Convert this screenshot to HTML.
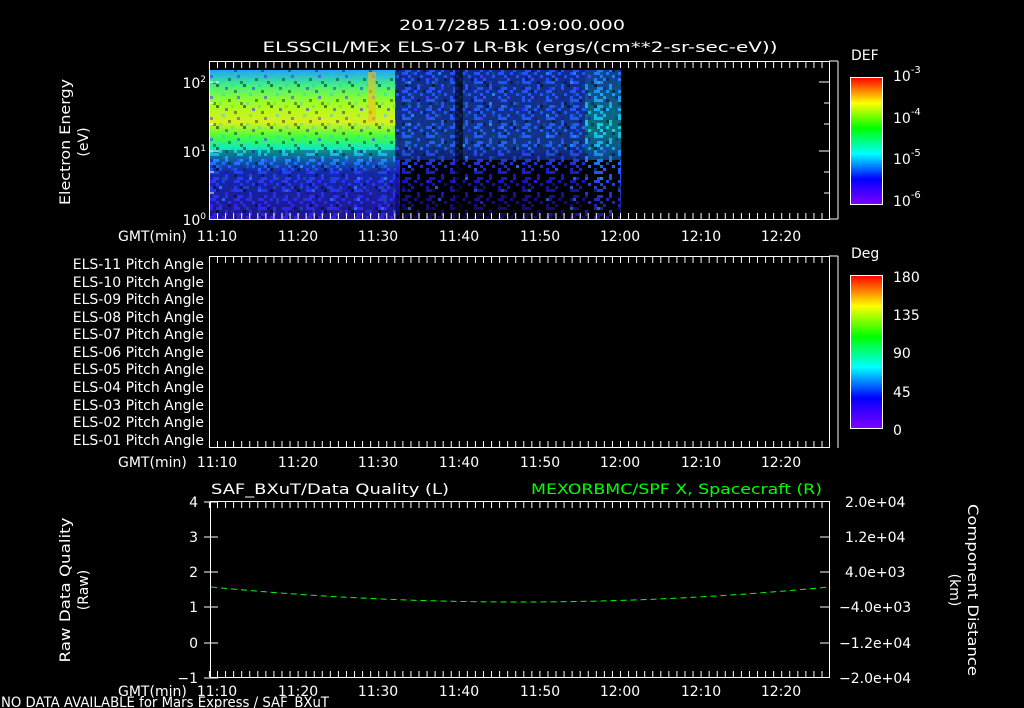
<!DOCTYPE html>
<html><head><meta charset="utf-8"><style>
html,body{margin:0;padding:0;background:#000;width:1024px;height:708px;overflow:hidden}
svg{display:block}
text{font-family:"DejaVu Sans","Liberation Sans",sans-serif;fill:#fff;font-size:14px}
</style></head><body>
<svg width="1024" height="708" viewBox="0 0 1024 708" xmlns="http://www.w3.org/2000/svg">
<defs>
<linearGradient id="cb" x1="0" y1="1" x2="0" y2="0">
<stop offset="0" stop-color="#7f00ff"/><stop offset="0.2" stop-color="#0000ff"/><stop offset="0.4" stop-color="#00ffff"/><stop offset="0.6" stop-color="#00ff00"/><stop offset="0.8" stop-color="#ffff00"/><stop offset="1" stop-color="#ff0000"/>
</linearGradient>
<linearGradient id="sp1" x1="0" y1="0" x2="0" y2="1">
<stop offset="0" stop-color="#20a0ff"/><stop offset="0.1" stop-color="#40f080"/><stop offset="0.22" stop-color="#a0ff20"/><stop offset="0.35" stop-color="#d8f020"/><stop offset="0.45" stop-color="#40ff40"/><stop offset="0.53" stop-color="#10e8c0"/><stop offset="0.6" stop-color="#1890ff"/><stop offset="0.68" stop-color="#2040ff"/><stop offset="1" stop-color="#3020e0"/>
</linearGradient>
<linearGradient id="sp2" x1="0" y1="0" x2="0" y2="1">
<stop offset="0" stop-color="#2050ff"/><stop offset="0.5" stop-color="#2060f0"/><stop offset="0.7" stop-color="#1818c0"/><stop offset="1" stop-color="#100850"/>
</linearGradient>
<linearGradient id="sp3" x1="0" y1="0" x2="0" y2="1">
<stop offset="0" stop-color="#2070ff"/><stop offset="0.4" stop-color="#10d0e0"/><stop offset="0.7" stop-color="#2050ff"/><stop offset="1" stop-color="#201080"/>
</linearGradient>
<pattern id="noise" width="27" height="21" patternUnits="userSpaceOnUse">
<rect x="0" y="0" width="3" height="3" fill="#000" opacity=".5"/><rect x="9" y="3" width="3" height="3" fill="#3010ff" opacity=".5"/><rect x="18" y="6" width="3" height="3" fill="#000" opacity=".4"/><rect x="6" y="9" width="3" height="3" fill="#20c0ff" opacity=".4"/><rect x="21" y="12" width="3" height="3" fill="#6010ff" opacity=".5"/><rect x="12" y="15" width="3" height="3" fill="#000" opacity=".4"/><rect x="3" y="18" width="3" height="3" fill="#20d0ff" opacity=".4"/><rect x="15" y="0" width="3" height="3" fill="#20b0ff" opacity=".3"/><rect x="24" y="18" width="3" height="3" fill="#000" opacity=".4"/>
</pattern>
<pattern id="noise2" width="24" height="18" patternUnits="userSpaceOnUse">
<rect x="0" y="0" width="6" height="3" fill="#000"/><rect x="9" y="0" width="9" height="3" fill="#000"/><rect x="3" y="3" width="9" height="3" fill="#000"/><rect x="15" y="3" width="9" height="3" fill="#000"/><rect x="0" y="6" width="3" height="3" fill="#000"/><rect x="6" y="6" width="12" height="3" fill="#000"/><rect x="21" y="6" width="3" height="3" fill="#000"/><rect x="3" y="9" width="15" height="3" fill="#000"/><rect x="0" y="12" width="9" height="3" fill="#000"/><rect x="12" y="12" width="12" height="3" fill="#000"/><rect x="3" y="15" width="6" height="3" fill="#000"/><rect x="12" y="15" width="9" height="3" fill="#000"/>
</pattern>
</defs>

<text x="512" y="30" text-anchor="middle" font-size="16" textLength="226" lengthAdjust="spacingAndGlyphs">2017/285 11:09:00.000</text>
<text x="520" y="52" text-anchor="middle" font-size="16" textLength="515" lengthAdjust="spacingAndGlyphs">ELSSCIL/MEx ELS-07 LR-Bk  (ergs/(cm**2-sr-sec-eV))</text>

<!-- spectrogram -->
<rect x="210" y="70" width="185" height="149" fill="url(#sp1)"/>
<rect x="210" y="70" width="185" height="149" fill="url(#noise)"/>
<rect x="210" y="150" width="185" height="69" fill="url(#noise2)" opacity=".35"/>
<rect x="368" y="72" width="8" height="50" fill="#f0c020" opacity=".6"/>
<rect x="395" y="70" width="190" height="149" fill="url(#sp2)"/>
<rect x="585" y="70" width="36" height="149" fill="url(#sp3)"/>
<rect x="395" y="70" width="226" height="149" fill="url(#noise)"/>
<rect x="395" y="70" width="226" height="90" fill="url(#noise2)" opacity=".45"/>
<rect x="400" y="160" width="220" height="59" fill="url(#noise2)"/>
<rect x="455" y="70" width="8" height="149" fill="#000" opacity=".6"/>

<!-- panel1 frame -->
<rect x="209.5" y="61.5" width="620" height="158" fill="none" stroke="#fff"/>
<g stroke="#fff" stroke-dasharray="1 7.06">
<line x1="208.94" y1="65" x2="829" y2="65" stroke-width="6"/>
<line x1="208.94" y1="216" x2="829" y2="216" stroke-width="6"/>
<line x1="208.94" y1="260" x2="829" y2="260" stroke-width="6"/>
<line x1="208.94" y1="444" x2="829" y2="444" stroke-width="6"/>
<line x1="208.94" y1="505" x2="829" y2="505" stroke-width="6"/>
<line x1="208.94" y1="674" x2="829" y2="674" stroke-width="6"/>
</g>
<g stroke="#fff">
<line x1="209" y1="82" x2="219" y2="82"/><line x1="209" y1="151" x2="219" y2="151"/>
<line x1="829" y1="82" x2="819" y2="82"/><line x1="829" y1="151" x2="819" y2="151"/>
<line x1="209" y1="103" x2="214" y2="103"/><line x1="209" y1="124" x2="214" y2="124"/><line x1="209" y1="172" x2="214" y2="172"/><line x1="209" y1="193" x2="214" y2="193"/>
<line x1="829" y1="103" x2="824" y2="103"/><line x1="829" y1="124" x2="824" y2="124"/><line x1="829" y1="172" x2="824" y2="172"/><line x1="829" y1="193" x2="824" y2="193"/>
<line x1="829" y1="61" x2="838" y2="61"/><line x1="829" y1="219" x2="838" y2="219"/><line x1="838" y1="61" x2="838" y2="219"/>
</g>
<text x="206" y="88" text-anchor="end">10<tspan font-size="9" dy="-6">2</tspan></text>
<text x="206" y="157" text-anchor="end">10<tspan font-size="9" dy="-6">1</tspan></text>
<text x="206" y="225" text-anchor="end">10<tspan font-size="9" dy="-6">0</tspan></text>
<text transform="translate(70,142) rotate(-90)" text-anchor="middle" textLength="126" lengthAdjust="spacingAndGlyphs">Electron Energy</text>
<text transform="translate(88,142) rotate(-90)" text-anchor="middle">(eV)</text>
<g font-size="13">
<text x="118" y="241">GMT(min)</text>
<text x="217" y="241" text-anchor="middle">11:10</text><text x="298" y="241" text-anchor="middle">11:20</text><text x="378" y="241" text-anchor="middle">11:30</text><text x="459" y="241" text-anchor="middle">11:40</text><text x="540" y="241" text-anchor="middle">11:50</text><text x="620" y="241" text-anchor="middle">12:00</text><text x="701" y="241" text-anchor="middle">12:10</text><text x="781" y="241" text-anchor="middle">12:20</text>
</g>
<!-- colorbar 1 -->
<text x="851" y="60" font-size="15">DEF</text>
<rect x="850.5" y="77.5" width="32" height="127" fill="url(#cb)" stroke="#fff"/>
<text x="893" y="81" font-size="15">10<tspan font-size="10" dy="-8">-3</tspan></text>
<text x="893" y="123" font-size="15">10<tspan font-size="10" dy="-8">-4</tspan></text>
<text x="893" y="164" font-size="15">10<tspan font-size="10" dy="-8">-5</tspan></text>
<text x="893" y="206" font-size="15">10<tspan font-size="10" dy="-8">-6</tspan></text>

<!-- panel 2 -->
<rect x="209.5" y="256.5" width="620" height="191" fill="none" stroke="#fff"/>
<line x1="829" y1="256" x2="838" y2="256" stroke="#fff"/><line x1="838" y1="256" x2="838" y2="448" stroke="#fff"/>
<g font-size="13" text-anchor="end">
<text x="204" y="269">ELS-11 Pitch Angle</text><text x="204" y="287">ELS-10 Pitch Angle</text><text x="204" y="304">ELS-09 Pitch Angle</text><text x="204" y="322">ELS-08 Pitch Angle</text><text x="204" y="339">ELS-07 Pitch Angle</text><text x="204" y="357">ELS-06 Pitch Angle</text><text x="204" y="374">ELS-05 Pitch Angle</text><text x="204" y="392">ELS-04 Pitch Angle</text><text x="204" y="410">ELS-03 Pitch Angle</text><text x="204" y="427">ELS-02 Pitch Angle</text><text x="204" y="445">ELS-01 Pitch Angle</text>
</g>
<g font-size="13">
<text x="118" y="467">GMT(min)</text>
<text x="217" y="467" text-anchor="middle">11:10</text><text x="298" y="467" text-anchor="middle">11:20</text><text x="378" y="467" text-anchor="middle">11:30</text><text x="459" y="467" text-anchor="middle">11:40</text><text x="540" y="467" text-anchor="middle">11:50</text><text x="620" y="467" text-anchor="middle">12:00</text><text x="701" y="467" text-anchor="middle">12:10</text><text x="781" y="467" text-anchor="middle">12:20</text>
</g>
<text x="851" y="258" font-size="15">Deg</text>
<rect x="850.5" y="275.5" width="32" height="153" fill="url(#cb)" stroke="#fff"/>
<g font-size="16">
<text x="893" y="282">180</text><text x="893" y="320">135</text><text x="893" y="358">90</text><text x="893" y="397">45</text><text x="893" y="435">0</text>
</g>

<!-- panel 3 -->
<text x="211" y="494" font-size="15" textLength="238" lengthAdjust="spacingAndGlyphs">SAF_BXuT/Data Quality (L)</text>
<text x="531" y="494" font-size="15" textLength="291" lengthAdjust="spacingAndGlyphs" style="fill:#00ff00">MEXORBMC/SPF X, Spacecraft (R)</text>
<rect x="210.5" y="501.5" width="619" height="176" fill="none" stroke="#fff"/>
<g stroke="#fff">
<line x1="204" y1="502" x2="218" y2="502"/><line x1="204" y1="537" x2="218" y2="537"/><line x1="204" y1="572" x2="218" y2="572"/><line x1="204" y1="607" x2="218" y2="607"/><line x1="204" y1="643" x2="218" y2="643"/><line x1="204" y1="678" x2="218" y2="678"/>
<line x1="829" y1="537" x2="820" y2="537"/><line x1="829" y1="572" x2="820" y2="572"/><line x1="829" y1="607" x2="820" y2="607"/><line x1="829" y1="643" x2="820" y2="643"/>
</g>
<g font-size="14" text-anchor="end">
<text x="198" y="507">4</text><text x="198" y="542">3</text><text x="198" y="577">2</text><text x="198" y="612">1</text><text x="198" y="648">0</text><text x="198" y="683">−1</text>
</g>
<g font-size="13">
<text x="845" y="507">2.0e+04</text><text x="845" y="542">1.2e+04</text><text x="845" y="577">4.0e+03</text><text x="839" y="612">−4.0e+03</text><text x="839" y="648">−1.2e+04</text><text x="839" y="683">−2.0e+04</text>
</g>
<path d="M211 587 Q520 617 829 587" fill="none" stroke="#00ff00" stroke-dasharray="6,4"/>
<text transform="translate(70,590) rotate(-90)" text-anchor="middle" textLength="145" lengthAdjust="spacingAndGlyphs">Raw Data Quality</text>
<text transform="translate(88,590) rotate(-90)" text-anchor="middle">(Raw)</text>
<text transform="translate(968,590) rotate(90)" text-anchor="middle" textLength="172" lengthAdjust="spacingAndGlyphs">Component Distance</text>
<text transform="translate(950,590) rotate(90)" text-anchor="middle">(km)</text>
<g font-size="13">
<text x="118" y="696">GMT(min)</text>
<text x="217" y="696" text-anchor="middle">11:10</text><text x="298" y="696" text-anchor="middle">11:20</text><text x="378" y="696" text-anchor="middle">11:30</text><text x="459" y="696" text-anchor="middle">11:40</text><text x="540" y="696" text-anchor="middle">11:50</text><text x="620" y="696" text-anchor="middle">12:00</text><text x="701" y="696" text-anchor="middle">12:10</text><text x="781" y="696" text-anchor="middle">12:20</text>
</g>
<text x="1" y="707" font-size="12" textLength="328" lengthAdjust="spacingAndGlyphs">NO DATA AVAILABLE for Mars  Express / SAF_BXuT</text>
</svg>
</body></html>
